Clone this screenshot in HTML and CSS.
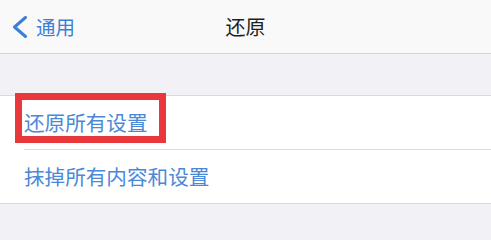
FILE: index.html
```html
<!DOCTYPE html>
<html lang="zh-CN">
<head>
<meta charset="utf-8">
<title>还原</title>
<link rel="stylesheet" href="styles.css">
</head>
<body>
<div class="screen">
  <header class="nav">
    <div class="back">
      <svg class="chev" width="16" height="22" viewBox="0 0 16 22"><polyline points="13.5,1.5 2.5,11 13.5,20.5" fill="none" stroke="#3b80d8" stroke-width="3" stroke-linecap="round" stroke-linejoin="round"/></svg>
      <span class="back-label">通用</span>
    </div>
    <div class="title">还原</div>
  </header>
  <div class="spacer"></div>
  <section class="group">
    <div class="row">
      <span class="label">还原所有设置</span>
      <div class="highlight"></div>
    </div>
    <div class="row">
      <span class="label">抹掉所有内容和设置</span>
    </div>
  </section>
</div>
</body>
</html>
```

FILE: styles.css
```css
html, body {
  margin: 0;
  padding: 0;
}
body {
  background: #f2f2f6;
  font-family: "Noto Sans CJK SC", "Noto Sans", sans-serif;
  width: 491px;
  height: 240px;
  overflow: hidden;
}
.screen {
  display: flex;
  flex-direction: column;
}
.nav {
  position: relative;
  height: 53px;
  background: #f9f9f9;
  border-bottom: 1px solid #d4d4d6;
  display: flex;
  align-items: center;
}
.back {
  display: flex;
  align-items: center;
  padding-left: 12px;
  gap: 8px;
  color: #3b80d8;
}
.chev {
  display: block;
}
.back-label {
  font-size: 19.5px;
  line-height: 1;
  margin-top: 1px;
}
.title {
  position: absolute;
  left: 0;
  right: 0;
  top: 0;
  bottom: 0;
  display: flex;
  align-items: center;
  justify-content: center;
  font-size: 20px;
  color: #1f1f1f;
  pointer-events: none;
}
.spacer {
  height: 41px;
}
.group {
  background: #ffffff;
  border-top: 1px solid #dadadc;
  border-bottom: 1px solid #dadadc;
  padding-left: 24px;
}
.row {
  position: relative;
  height: 53px;
  display: flex;
  align-items: center;
}
.row + .row {
  border-top: 1px solid #dedee0;
}
.label {
  font-size: 20.6px;
  color: #4a88d8;
  line-height: 1;
}
.highlight {
  position: absolute;
  left: -9px;
  top: -3px;
  width: 151px;
  height: 50px;
  box-sizing: border-box;
  border: 7px solid #e8383b;
}
```
